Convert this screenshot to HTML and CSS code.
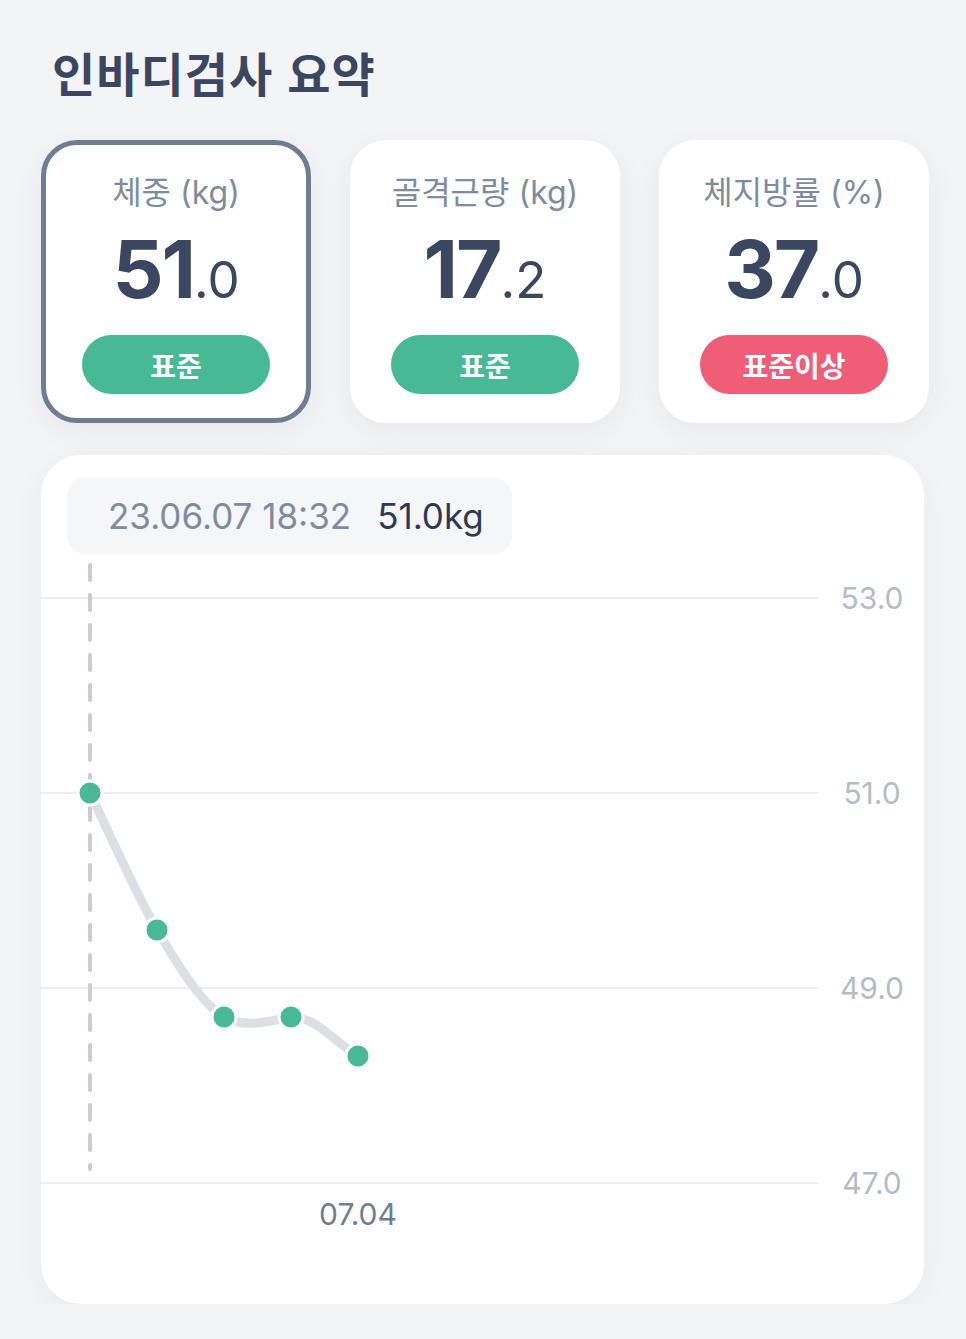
FILE: index.html
```html
<!DOCTYPE html>
<html lang="ko">

<head>
    <meta charset="UTF-8">
    <meta name="viewport" content="width=device-width, initial-scale=1.0">
    <title>인바디검사 요약</title>
    <link rel="stylesheet" href="styles.css">
</head>

<body>
    <div class="page">
        <h1 class="title">인바디검사 요약</h1>

        <!-- 요약 카드 -->
        <div class="summary">
            <div class="stat-card active">
                <div class="stat-label">체중 (kg)</div>
                <div class="stat-value">51<small>.0</small></div>
                <span class="badge normal">표준</span>
            </div>
            <div class="stat-card">
                <div class="stat-label">골격근량 (kg)</div>
                <div class="stat-value">17<small>.2</small></div>
                <span class="badge normal">표준</span>
            </div>
            <div class="stat-card">
                <div class="stat-label">체지방률 (%)</div>
                <div class="stat-value">37<small>.0</small></div>
                <span class="badge over">표준이상</span>
            </div>
        </div>

        <!-- 그래프 -->
        <div class="chart-card">
            <div class="tooltip">
                <span class="tip-date">23.06.07 18:32</span>
                <span class="tip-value">51.0kg</span>
            </div>
            <svg class="chart" width="883" height="849" viewBox="0 0 883 849">
                <g class="grid">
                    <line x1="0" y1="143" x2="777" y2="143"></line>
                    <line x1="0" y1="338" x2="777" y2="338"></line>
                    <line x1="0" y1="533" x2="777" y2="533"></line>
                    <line x1="0" y1="728" x2="777" y2="728"></line>
                </g>
                <g class="y-label">
                    <text x="831" y="154">53.0</text>
                    <text x="831" y="349">51.0</text>
                    <text x="831" y="544">49.0</text>
                    <text x="831" y="739">47.0</text>
                </g>
                <line class="guide" x1="49" y1="110" x2="49" y2="714"></line>
                <path class="trend" d="M49,338 C72,386 94,437 116,475 C138,512 160,548 183,562 C205,574 228,566 250,562 C272,560 295,588 317,601"></path>
                <g class="dots">
                    <circle cx="49" cy="338" r="12"></circle>
                    <circle cx="116" cy="475" r="12"></circle>
                    <circle cx="183" cy="562" r="12"></circle>
                    <circle cx="250" cy="562" r="12"></circle>
                    <circle cx="317" cy="601" r="12"></circle>
                </g>
                <text class="x-label" x="317" y="770">07.04</text>
            </svg>
        </div>
    </div>
</body>

</html>
```

FILE: styles.css
```css
* {
    margin: 0;
    padding: 0;
    box-sizing: border-box;
}

html,
body {
    background-color: #f3f4f6;
    font-family: Inter, "Noto Sans CJK KR", sans-serif;
    color: #3b4661;
}

.page {
    padding: 40px 0 0 41px;
}
/* 제목 */

.title {
    font-family: "Noto Sans CJK KR", sans-serif;
    font-size: 47px;
    font-weight: 700;
    line-height: 64px;
    padding-left: 11px;
    letter-spacing: 1px;
    color: #3b4661;
}
/* 요약 카드 */

.summary {
    display: grid;
    grid-template-columns: repeat(3, 270px);
    column-gap: 39px;
    margin-top: 36px;
}

.stat-card {
    height: 283px;
    background-color: #fff;
    border: 5px solid #fff;
    border-radius: 36px;
    box-shadow: 0 8px 30px rgba(40, 50, 70, 0.06);
    display: flex;
    flex-direction: column;
    align-items: center;
    padding-top: 27px;
}

.stat-card.active {
    border-color: #6f7d92;
}

.stat-label {
    font-family: Inter, "Noto Sans CJK KR", sans-serif;
    font-size: 32px;
    line-height: 42px;
    color: #7f8ca0;
}

.stat-value {
    font-size: 80px;
    font-weight: 700;
    line-height: 90px;
    margin-top: 10px;
    letter-spacing: -2px;
    color: #3b4661;
}

.stat-value small {
    font-size: 51px;
    font-weight: 400;
    letter-spacing: 0;
}

.badge {
    display: flex;
    align-items: center;
    justify-content: center;
    width: 188px;
    height: 59px;
    margin-top: 10px;
    border-radius: 30px;
    font-family: "Noto Sans CJK KR", sans-serif;
    font-size: 28px;
    font-weight: 700;
    color: #fff;
}

.badge.normal {
    background-color: #47b995;
}

.badge.over {
    background-color: #f05d77;
}
/* 그래프 카드 */

.chart-card {
    position: relative;
    width: 883px;
    height: 849px;
    margin-top: 32px;
    background-color: #fff;
    border-radius: 40px;
    box-shadow: 0 8px 30px rgba(40, 50, 70, 0.05);
}

.chart {
    display: block;
}

.tooltip {
    position: absolute;
    top: 23px;
    left: 26px;
    height: 76px;
    padding: 0 28px 0 41px;
    display: flex;
    align-items: center;
    gap: 26px;
    background-color: #f5f6f8;
    border-radius: 18px;
    font-size: 35px;
}

.tip-date {
    color: #7f8ca0;
}

.tip-value {
    color: #2f3a52;
}

.grid line {
    stroke: #eceef1;
    stroke-width: 2;
}

.y-label text {
    font-family: Inter, sans-serif;
    font-size: 30px;
    fill: #b5bcc7;
    text-anchor: middle;
}

.guide {
    stroke: #c9cdd3;
    stroke-width: 4;
    stroke-linecap: round;
    stroke-dasharray: 15 15;
}

.trend {
    fill: none;
    stroke: #dcdfe4;
    stroke-width: 9;
    stroke-linecap: round;
}

.dots circle {
    fill: #47b995;
    stroke: #fff;
    stroke-width: 3;
}

.x-label {
    font-family: Inter, sans-serif;
    font-size: 30px;
    fill: #6f7d92;
    text-anchor: middle;
}
```
